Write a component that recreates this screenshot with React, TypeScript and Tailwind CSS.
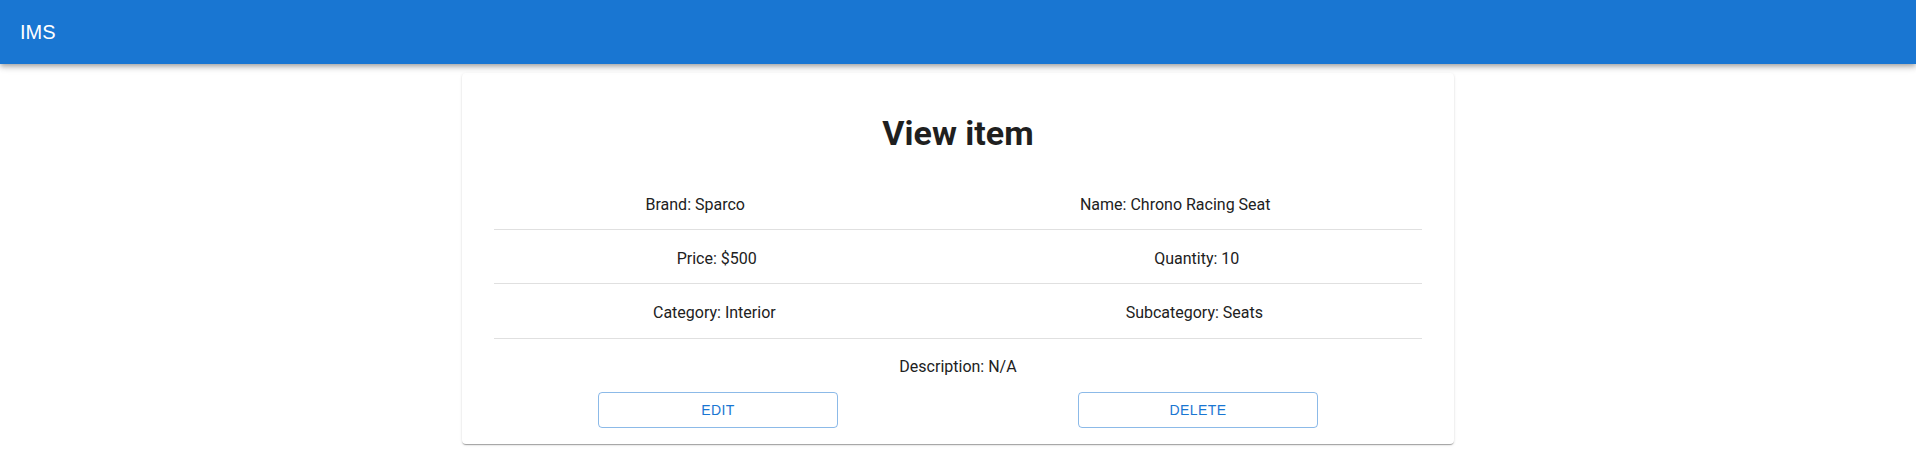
import React from 'react';

const rows: [string, string][] = [
  ['Brand: Sparco', 'Name: Chrono Racing Seat'],
  ['Price: $500', 'Quantity: 10'],
  ['Category: Interior', 'Subcategory: Seats'],
];

const ItemButton: React.FC<{ label: string }> = ({ label }) => (
  <button className="w-[240px] h-9 rounded border border-[#1976d2]/50 text-[#1976d2] text-sm uppercase tracking-[0.4px] font-['Liberation_Sans',Arial,sans-serif]">
    {label}
  </button>
);

export default function App() {
  return (
    <div className="min-h-screen bg-white font-['Roboto',sans-serif] text-[#212121]">
      <header className="relative z-10 h-16 flex items-center px-5 bg-[#1976d2] text-white shadow-[0px_2px_4px_-1px_rgba(0,0,0,0.2),0px_4px_5px_0px_rgba(0,0,0,0.14),0px_1px_10px_0px_rgba(0,0,0,0.12)]">
        <h6 className="text-xl leading-8 font-['Liberation_Sans',Arial,sans-serif]">IMS</h6>
      </header>

      <main className="pt-[9px] pb-4">
        <div className="w-[992px] mx-auto bg-white rounded px-4 pt-[39px] pb-4 shadow-[0px_2px_1px_-1px_rgba(0,0,0,0.2),0px_1px_1px_0px_rgba(0,0,0,0.14),0px_1px_3px_0px_rgba(0,0,0,0.12)]">
          <h1 className="text-center text-[34px] leading-[42px] font-bold text-[#1f1f1f]">View item</h1>

          <ul className="mt-[22px]">
            {rows.map(([left, right]) => (
              <li key={left}>
                <div className="flex pt-[16.6px] pb-[12.6px]">
                  <span className="flex-auto text-center text-base leading-6">{left}</span>
                  <span className="flex-auto text-center text-base leading-6">{right}</span>
                </div>
                <hr className="mx-4 border-0 border-t border-[#e0e0e0]" />
              </li>
            ))}
          </ul>

          <p className="mt-4 text-center text-base leading-6">Description: N/A</p>

          <div className="mt-[13px] flex justify-around">
            <ItemButton label="Edit" />
            <ItemButton label="Delete" />
          </div>
        </div>
      </main>
    </div>
  );
}
